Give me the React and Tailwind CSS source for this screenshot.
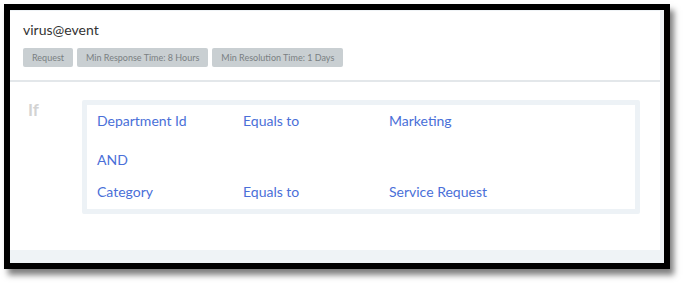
import React from 'react';

const badges = ['Request', 'Min Response Time: 8 Hours', 'Min Resolution Time: 1 Days'];

const Cell = ({ children }) => (
  <div className="w-[146px] shrink-0 leading-5">{children}</div>
);

const App = () => {
  return (
    <div className="w-[683px] h-[283px] bg-white p-1" style={{ fontFamily: 'Lato, "Open Sans", sans-serif' }}>
      <div className="w-[666px] h-[265px] border-[6px] border-black bg-[#eff3f6] shadow-[4px_6px_6px_rgba(0,0,0,0.5)] flex flex-col pt-[1px] pr-[4px] pb-[13px]">
        <div className="flex-1 bg-white flex flex-col">
          <div className="px-[13px] pt-[9px] pb-[13px]">
            <div className="text-[14px] leading-5 text-[#333]">virus@event</div>
            <div className="flex gap-[4px] mt-[8px]">
              {badges.map((b) => (
                <span key={b} className="h-[19px] px-[9px] flex items-center rounded-[2px] bg-[#c9cfd2] text-[9px] text-[#7a7f82]">
                  {b}
                </span>
              ))}
            </div>
          </div>
          <div className="h-[2px] bg-[#e3e7ea]" />
          <div className="flex pt-[18px]">
            <div className="w-[72px] pl-[18px] text-[17px] font-bold leading-5 text-[#d3d3d3]">If</div>
            <div className="w-[558px] border-[5px] border-[#edf2f6] rounded-[2px] pl-[10px] pt-[6px] pb-[7px] text-[14px] text-[#4a6fd8]">
              <div className="flex">
                <Cell>Department Id</Cell>
                <Cell>Equals to</Cell>
                <Cell>Marketing</Cell>
              </div>
              <div className="mt-[19px] leading-5">AND</div>
              <div className="flex mt-[12px]">
                <Cell>Category</Cell>
                <Cell>Equals to</Cell>
                <Cell>Service Request</Cell>
              </div>
            </div>
          </div>
        </div>
      </div>
    </div>
  );
};

export default App;
